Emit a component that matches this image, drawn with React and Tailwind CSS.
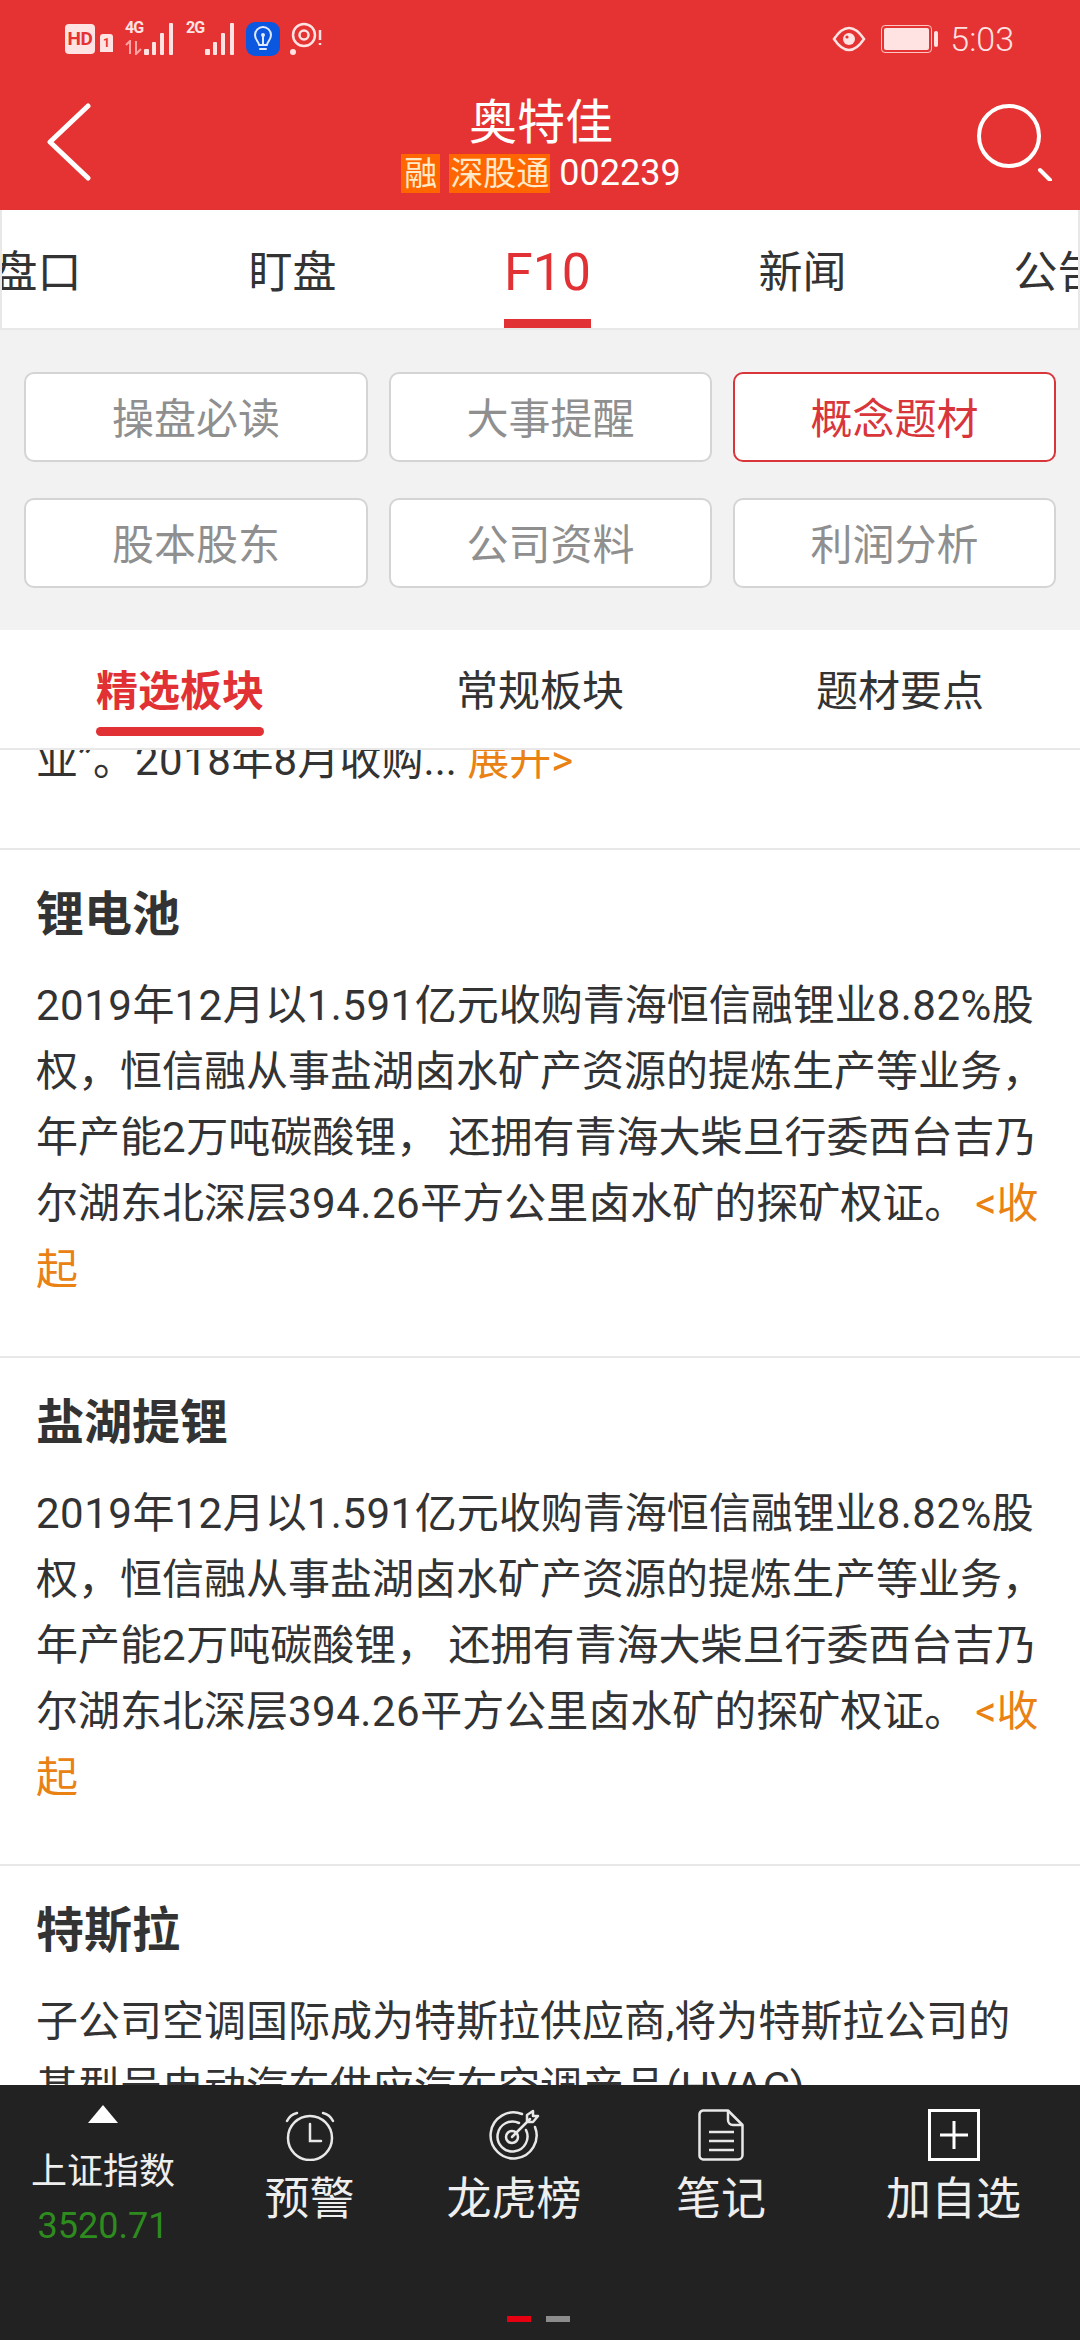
import React from "react";

const FONT = "font-['Roboto','Noto_Sans_CJK_SC',sans-serif]";

// latin runs sit a little wider than the default roboto in the reference
const Num = ({ children }) => <span className="tracking-[0.5px]">{children}</span>;

const Bars = ({ label, arrows }) => (
  <div className="relative w-[52px] h-[34px]">
    <span className="absolute left-0 top-[-2px] text-[16px] leading-[16px] font-bold tracking-[-1px] text-[#ffe3e3]">{label}</span>
    {arrows && (
      <svg className="absolute left-0 top-[18px]" width="18" height="15" viewBox="0 0 18 15" fill="none" stroke="#ffa3a3" strokeWidth="2">
        <path d="M1 5l4-4v13M11 1v13l5-5" />
      </svg>
    )}
    <svg className="absolute left-0 top-0" width="52" height="34" viewBox="0 0 52 34" fill="#ffe3e3">
      <rect x="19" y="27" width="5" height="6" rx="1" />
      <rect x="27" y="20" width="4" height="13" rx="1" />
      <rect x="35" y="11" width="4" height="22" rx="1" />
      <rect x="44" y="1" width="4" height="32" rx="1" />
    </svg>
  </div>
);

const StatusBar = () => (
  <div className="flex items-center justify-between h-[75px] pl-[65px] pr-[66px] pt-[2px]">
    <div className="flex items-center">
      <div className="w-[30px] h-[30px] rounded-[4px] bg-[#ffe3e3] flex items-center justify-center text-[#e53333] text-[19px] font-bold leading-none tracking-[-0.5px]">
        HD
      </div>
      <div className="ml-[5px] mt-[8px] w-[13px] h-[18px] rounded-t-[3px] bg-[#ffe3e3] flex items-center justify-center text-[#e53333] text-[12px] font-bold leading-none">
        1
      </div>
      <div className="ml-[12px]">
        <Bars label="4G" arrows />
      </div>
      <div className="ml-[9px]">
        <Bars label="2G" />
      </div>
      <div className="ml-[8px] w-[34px] h-[34px] rounded-[9px] bg-[#0b57e0] flex items-center justify-center">
        <svg width="24" height="28" viewBox="0 0 24 28" fill="none" stroke="#dfeaff" strokeWidth="2" strokeLinecap="round" strokeLinejoin="round">
          <path d="M8 20c0-3-4-5-4-10a8 8 0 0 1 16 0c0 5-4 7-4 10z" />
          <path d="M12 11v9M9 24h6" />
          <circle cx="12" cy="10" r="1" fill="#dfeaff" />
        </svg>
      </div>
      <svg className="ml-[10px]" width="34" height="34" viewBox="0 0 34 34" fill="none" stroke="#ffe3e3" strokeWidth="2.5">
        <circle cx="14" cy="13" r="11" />
        <circle cx="14" cy="13" r="4.5" />
        <circle cx="3" cy="30" r="3" fill="#ffe3e3" stroke="none" />
        <path d="M30 8v10M30 21v2" />
      </svg>
    </div>
    <div className="flex items-center">
      <svg width="34" height="26" viewBox="0 0 34 26" fill="none" stroke="#ffe3e3" strokeWidth="2.5">
        <path d="M2 13C8 4 13 2 17 2s9 2 15 11c-6 9-11 11-15 11S8 22 2 13z" />
        <circle cx="17" cy="13" r="6" fill="#ffe3e3" stroke="none" />
        <circle cx="15" cy="11" r="1.6" fill="#e53333" stroke="none" />
      </svg>
      <div className="ml-[15px] w-[51px] h-[28px] rounded-[4px] border border-[#ffc4c4] p-[2px]">
        <div className="w-full h-full rounded-[2px] bg-[#ffe3e3]" />
      </div>
      <div className="ml-[2px] w-[4px] h-[16px] rounded-full bg-[#ffe3e3]" />
      <span className="ml-[12px] text-[34px] leading-none text-[#ffe3e3] font-light">5:03</span>
    </div>
  </div>
);

const Header = () => (
  <div className="bg-[#e53333] h-[210px] shrink-0">
    <StatusBar />
    <div className="flex items-start justify-between pl-[46px] pr-[26px]">
      <div className="w-[60px]">
        <svg className="mt-[28px]" width="46" height="78" viewBox="0 0 46 78" fill="none" stroke="#fff" strokeWidth="5" strokeLinecap="round" strokeLinejoin="round">
          <path d="M42 3L4 39l38 36" />
        </svg>
      </div>
      <div className="flex flex-col items-center pt-[23px]">
        <div className="text-[48px] leading-[50px] text-white">奥特佳</div>
        <div className="flex items-center mt-[6px] h-[39px]">
          <span className="bg-[#ff6600] text-[#ffe9c8] text-[33px] leading-[39px] px-[3px]">融</span>
          <span className="ml-[9px] bg-[#ff6600] text-[#ffe9c8] text-[33px] leading-[39px] px-[1px]">深股通</span>
          <span className="ml-[9px] text-[36px] leading-[39px] text-white">002239</span>
        </div>
      </div>
      <svg className="mt-[28px]" width="78" height="78" viewBox="0 0 78 78" fill="none" stroke="#fff" strokeWidth="4" strokeLinecap="round">
        <circle cx="33" cy="33" r="30" />
        <path d="M64 67l10 10" />
      </svg>
    </div>
  </div>
);

const TopTabs = () => (
  <div className="h-[120px] shrink-0 bg-white border-x-2 border-b-2 border-[#e8e8e8] overflow-hidden flex">
    <div className="flex -ml-[92px]">
      {["盘口", "盯盘", "F10", "新闻", "公告"].map((tab) => (
        <div key={tab} className="w-[255px] shrink-0 flex justify-center">
          <div
            className={`relative h-[118px] pt-[7px] flex items-center whitespace-nowrap ${
              tab === "F10" ? "text-[52px] text-[#e13135]" : "text-[44px] text-[#333333]"
            }`}
          >
            {tab}
            {tab === "F10" && <div className="absolute left-0 right-0 bottom-0 h-[9px] bg-[#e13135]" />}
          </div>
        </div>
      ))}
    </div>
  </div>
);

const BUTTONS = ["操盘必读", "大事提醒", "概念题材", "股本股东", "公司资料", "利润分析"];

const ButtonGrid = () => (
  <div className="h-[300px] shrink-0 bg-[#f2f2f2] pt-[42px] pl-[24px]">
    <div className="grid grid-cols-[344px_323px_323px] gap-x-[21px] gap-y-[36px]">
      {BUTTONS.map((b) => (
        <div
          key={b}
          className={`h-[90px] pt-[4px] rounded-[10px] bg-white border-2 flex items-center justify-center text-[42px] ${
            b === "概念题材" ? "border-[#d8363a] text-[#d8363a]" : "border-[#d4d4d4] text-[#8f8f8f]"
          }`}
        >
          {b}
        </div>
      ))}
    </div>
  </div>
);

const SubTabs = () => (
  <div className="h-[120px] shrink-0 bg-white border-b-2 border-[#e8e8e8] grid grid-cols-3">
    {["精选板块", "常规板块", "题材要点"].map((t, i) => (
      <div key={t} className="flex justify-center">
        <div className={`relative h-[118px] pt-[5px] flex items-center text-[42px] ${i === 0 ? "font-bold text-[#e13135]" : "text-[#333333]"}`}>
          {t}
          {i === 0 && <div className="absolute left-0 right-0 bottom-[12px] h-[9px] rounded-full bg-[#e13135]" />}
        </div>
      </div>
    ))}
  </div>
);

const Section = ({ title }) => (
  <div className="border-t-2 border-[#e8e8e8] h-[508px]">
    <h3 className="pt-[40px] pl-[36px] text-[48px] leading-[50px] font-bold text-[#333333]">{title}</h3>
    <div className="mt-[33px] px-[36px] text-[42px] leading-[66px] text-[#333333] whitespace-nowrap">
      <div>
        <Num>2019</Num>年<Num>12</Num>月以<Num>1.591</Num>亿元收购青海恒信融锂业<Num>8.82%</Num>股
      </div>
      <div>权，恒信融从事盐湖卤水矿产资源的提炼生产等业务，</div>
      <div>
        年产能<Num>2</Num>万吨碳酸锂， 还拥有青海大柴旦行委西台吉乃
      </div>
      <div>
        尔湖东北深层<Num>394.26</Num>平方公里卤水矿的探矿权证。<span className="ml-[9px] text-[#e98113]">&lt;收</span>
      </div>
      <div className="text-[#e98113]">起</div>
    </div>
  </div>
);

const Content = () => (
  <div className="flex-1 min-h-0 overflow-hidden bg-white">
    <div className="-mt-[22px] h-[120px] px-[36px] text-[42px] leading-[66px] text-[#333333] whitespace-nowrap">
      业”。<Num>2018</Num>年<Num>8</Num>月收购... <span className="text-[#e98113]">展开&gt;</span>
    </div>
    <Section title="锂电池" />
    <Section title="盐湖提锂" />
    <div className="border-t-2 border-[#e8e8e8]">
      <h3 className="pt-[40px] pl-[36px] text-[48px] leading-[50px] font-bold text-[#333333]">特斯拉</h3>
      <div className="mt-[33px] px-[36px] text-[42px] leading-[66px] text-[#333333] whitespace-nowrap">
        <div>子公司空调国际成为特斯拉供应商,将为特斯拉公司的</div>
        <div>基型号电动汽车供应汽车空调产品(HVAC)</div>
      </div>
    </div>
  </div>
);

const AlarmIcon = () => (
  <svg width="52" height="52" viewBox="0 0 52 52" fill="none" stroke="#e8e8e8" strokeWidth="2.5" strokeLinecap="round">
    <circle cx="26" cy="29" r="22" />
    <path d="M26 15v17h11" />
    <path d="M3 12c2-4 6-7 10-8M49 12c-2-4-6-7-10-8" />
  </svg>
);

const TargetIcon = () => (
  <svg width="52" height="52" viewBox="0 0 52 52" fill="none" stroke="#e8e8e8" strokeWidth="2.5" strokeLinecap="round" strokeLinejoin="round">
    <path d="M34 5a23 23 0 1 0 13 13" />
    <path d="M31 14a15 15 0 1 0 7 7" />
    <circle cx="24" cy="28" r="6" />
    <path d="M24 28L42 10M39 13V6l6-4v5h5l-5 6z" />
  </svg>
);

const NoteIcon = () => (
  <svg width="46" height="52" viewBox="0 0 46 52" fill="none" stroke="#e8e8e8" strokeWidth="2.5" strokeLinejoin="round">
    <path d="M5 1.5h25L44.5 16v30a4.5 4.5 0 0 1-4.5 4.5H5A4 4 0 0 1 1.5 46V5A4 4 0 0 1 5 1.5z" />
    <path d="M30 1.5V11a5 5 0 0 0 5 5h9.5" />
    <path d="M11 23h25M11 32h25M11 41h25" />
  </svg>
);

const PlusIcon = () => (
  <svg width="52" height="52" viewBox="0 0 52 52" fill="none" stroke="#fff" strokeWidth="3">
    <rect x="1.5" y="1.5" width="49" height="49" />
    <path d="M12 26h28M26 12v28" />
  </svg>
);

const BottomBar = () => (
  <div className="relative h-[255px] shrink-0 bg-[#222222]">
    <div className="grid grid-cols-[206px_207px_202px_212px_253px]">
      <div className="flex flex-col items-center pt-[20px]">
        <svg width="30" height="18" viewBox="0 0 30 18" fill="#fff">
          <path d="M15 0l15 18H0z" />
        </svg>
        <div className="mt-[24px] text-[36px] leading-[50px] text-[#eeeeee]">上证指数</div>
        <div className="mt-[9px] text-[36px] leading-[40px] text-[#2e8b1e]">3520.71</div>
      </div>
      {[
        ["预警", <AlarmIcon key="a" />],
        ["龙虎榜", <TargetIcon key="t" />],
        ["笔记", <NoteIcon key="n" />],
        ["加自选", <PlusIcon key="p" />],
      ].map(([label, icon]) => (
        <div key={label} className="flex flex-col items-center pt-[24px]">
          <div className="h-[52px] flex items-center">{icon}</div>
          <div className="mt-[9px] text-[45px] leading-[60px] text-[#eeeeee]">{label}</div>
        </div>
      ))}
    </div>
    <div className="absolute left-[507px] bottom-[18px] flex gap-[15px]">
      <div className="w-[24px] h-[6px] bg-[#e60012]" />
      <div className="w-[24px] h-[6px] bg-[#8c8c8c]" />
    </div>
  </div>
);

export default function App() {
  return (
    <div className={`w-[1080px] h-[2340px] flex flex-col overflow-hidden bg-white ${FONT}`}>
      <Header />
      <TopTabs />
      <ButtonGrid />
      <SubTabs />
      <Content />
      <BottomBar />
    </div>
  );
}
